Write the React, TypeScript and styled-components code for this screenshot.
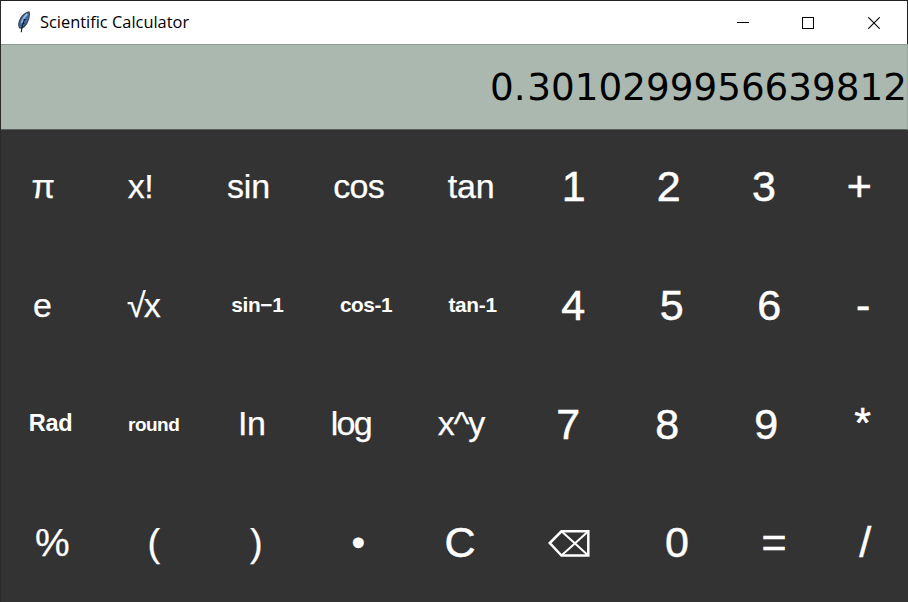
import React from "react";
import styled, { createGlobalStyle } from "styled-components";

const GlobalStyle = createGlobalStyle`
  * { box-sizing: border-box; }
  body { margin: 0; overflow: hidden; }
`;

const Window = styled.div`
  width: 908px;
  height: 602px;
  display: flex;
  flex-direction: column;
  background: #333333;
  border-top: 1px solid #222222;
  border-left: 1px solid #2a2a2a;
`;

const TitleBar = styled.header`
  flex: none;
  height: 43px;
  display: flex;
  align-items: center;
  background: #ffffff;
  border-right: 1px solid #222222;
`;

const Feather = styled.svg`
  flex: none;
  width: 14px;
  height: 22px;
  margin: 0 0 2px 16px;
`;

const Title = styled.h1`
  margin: 0 0 2px 9px;
  flex: 1;
  font: 400 16.4px/24px "Open Sans", "Noto Sans", sans-serif;
  color: #000000;
  white-space: nowrap;
`;

const Controls = styled.div`
  display: flex;
`;

const ControlButton = styled.button<{ $w: number }>`
  width: ${(p) => p.$w}px;
  height: 42px;
  padding: 0;
  border: 0;
  background: transparent;
  display: flex;
  align-items: center;
  justify-content: center;
`;

const Display = styled.output`
  flex: none;
  height: 86px;
  display: flex;
  align-items: center;
  justify-content: flex-end;
  padding-top: 2px;
  background: #aab8af;
  border-top: 1px solid #8f9a93;
  border-bottom: 1px solid #59605c;
  border-right: 1px solid #98a59d;
  font: 400 37.3px/1 "DejaVu Sans", sans-serif;
  color: #000000;
`;

const Point = styled.span`
  letter-spacing: 1.7px;
`;

const Keypad = styled.main`
  flex: 1;
  display: flex;
  flex-direction: column;
`;

const Row = styled.div`
  flex: none;
  height: 118.67px;
  padding-bottom: 4.8px;
  display: flex;
`;

const Key = styled.button<{ $w: number; $size: number; $bold?: boolean; $track?: number; $lift?: number }>`
  flex: none;
  width: ${(p) => p.$w}px;
  padding: 0 0 ${(p) => (p.$lift ?? 0) * 2}px;
  border: 0;
  background: transparent;
  display: flex;
  align-items: center;
  white-space: pre;
  color: #ffffff;
  font-family: "Liberation Sans", Arial, sans-serif;
  font-size: ${(p) => p.$size}px;
  font-weight: ${(p) => (p.$bold ? 700 : 400)};
  letter-spacing: ${(p) => p.$track ?? 0}px;
  line-height: 1;
  -webkit-text-stroke: ${(p) => (p.$bold ? 0 : p.$size > 40 ? 0.5 : 0.25)}px #ffffff;
`;

const RowStart = styled.div<{ $w: number }>`
  flex: none;
  width: ${(p) => p.$w}px;
`;

type KeySpec = { label: string; x: number; size: number; bold?: boolean; track?: number; lift?: number };

const k = (label: string, x: number, size: number, bold = false, track = 0, lift = 0): KeySpec => ({
  label,
  x,
  size,
  bold,
  track,
  lift,
});

const rows: KeySpec[][] = [
  [
    k("π", 31.5, 34, false, 0, 1), k("x!", 127.7, 34, false, -0.5, 1), k("sin", 227, 34, false, -0.2, 1),
    k("cos", 333.2, 34, false, -0.7, 1), k("tan", 447.7, 34, false, -0.2, 1),
    k("1", 561.8, 43), k("2", 656.7, 43), k("3", 752, 43), k("+", 846.8, 43),
  ],
  [
    k("e", 33, 34, false, 0, 1), k("√x", 127, 34, false, -2, 1), k("sin−1", 231.2, 20.8, true, -0.3),
    k("cos-1", 339.9, 20.8, true, -0.4), k("tan-1", 448.5, 20.8, true, -0.3),
    k("4", 561.4, 43), k("5", 659.9, 43), k("6", 757.2, 43), k("-", 856, 43),
  ],
  [
    k("Rad", 28.8, 23.5, true, -0.3), k("round", 128, 19, true, -0.5), k("In", 238, 34, false, -0.5, 1),
    k("log", 330.8, 34, false, -1.8, 1), k("x^y", 437.7, 34, false, -1.2, 1),
    k("7", 556.3, 43), k("8", 655.2, 43), k("9", 754.4, 43), k("*", 854.2, 43, false, 0, 2),
  ],
  [
    k("%", 35, 39), k("(", 147.5, 38), k(")", 250, 38), k("•", 351.5, 39), k("C", 444.5, 43),
    k("⌫", 547, 43), k("0", 665, 43), k("=", 761.4, 43), k("/", 859.3, 43),
  ],
];

const BackspaceIcon = () => (
  <svg width="44" height="30" viewBox="0 0 44 30" fill="none" stroke="#fff" strokeWidth="2.5" aria-label="Backspace">
    <path d="M2.8 15 14.500 3.300H41.300V27.500H14.500Z" />
    <path d="M14.500 3.300 41.300 27.500M41.300 3.300 14.500 27.500" strokeWidth="2" />
  </svg>
);

export default function App() {
  return (
    <>
      <GlobalStyle />
      <Window>
        <TitleBar>
          <Feather viewBox="0 0 14 22">
            <path d="M12 .8C8 1.4 3.4 6 2.1 11.2c-.5 2.6-.4 4.3.4 5.5l1.6.5c1.9-.4 4-2 5.5-4.6C11.700 8.900 13 4.400 12 .8Z" fill="#3c6da8" stroke="#3a424c" strokeWidth="1.200" />
            <path d="M10.300 3C7.700 5 5.600 8.500 4.700 12.500" stroke="#8db9e8" strokeWidth="2" fill="none" />
            <path d="M8 8C6 11 4.800 15 4.300 21.300M6.500 8.500l2.300.3M5 13l2.400-.6" stroke="#10151c" strokeWidth="1.100" fill="none" />
          </Feather>
          <Title>Scientific Calculator</Title>
          <Controls>
            <ControlButton aria-label="Minimize" $w={65}>
              <svg width="12" height="12" shapeRendering="crispEdges"><path d="M0 5.500H12" stroke="#000" /></svg>
            </ControlButton>
            <ControlButton aria-label="Maximize" $w={65}>
              <svg width="12" height="12" shapeRendering="crispEdges"><rect x=".5" y=".5" width="11" height="11" fill="none" stroke="#000" /></svg>
            </ControlButton>
            <ControlButton aria-label="Close" $w={67}>
              <svg width="12" height="12"><path d="M.3.3 11.700 11.700M11.700.3.3 11.700" stroke="#000" strokeWidth="1.100" /></svg>
            </ControlButton>
          </Controls>
        </TitleBar>
        <Display>
          <span>0<Point>.</Point>3010299956639812</span>
        </Display>
        <Keypad>
          {rows.map((row, r) => (
            <Row key={r}>
              <RowStart $w={row[0].x - 1} />
              {row.map((item, i) => (
                <Key
                  key={item.label}
                  $w={(i < row.length - 1 ? row[i + 1].x : 907) - item.x}
                  $size={item.size}
                  $bold={item.bold}
                  $track={item.track}
                  $lift={item.lift}
                >
                  {item.label === "⌫" ? <BackspaceIcon /> : item.label}
                </Key>
              ))}
            </Row>
          ))}
        </Keypad>
      </Window>
    </>
  );
}
